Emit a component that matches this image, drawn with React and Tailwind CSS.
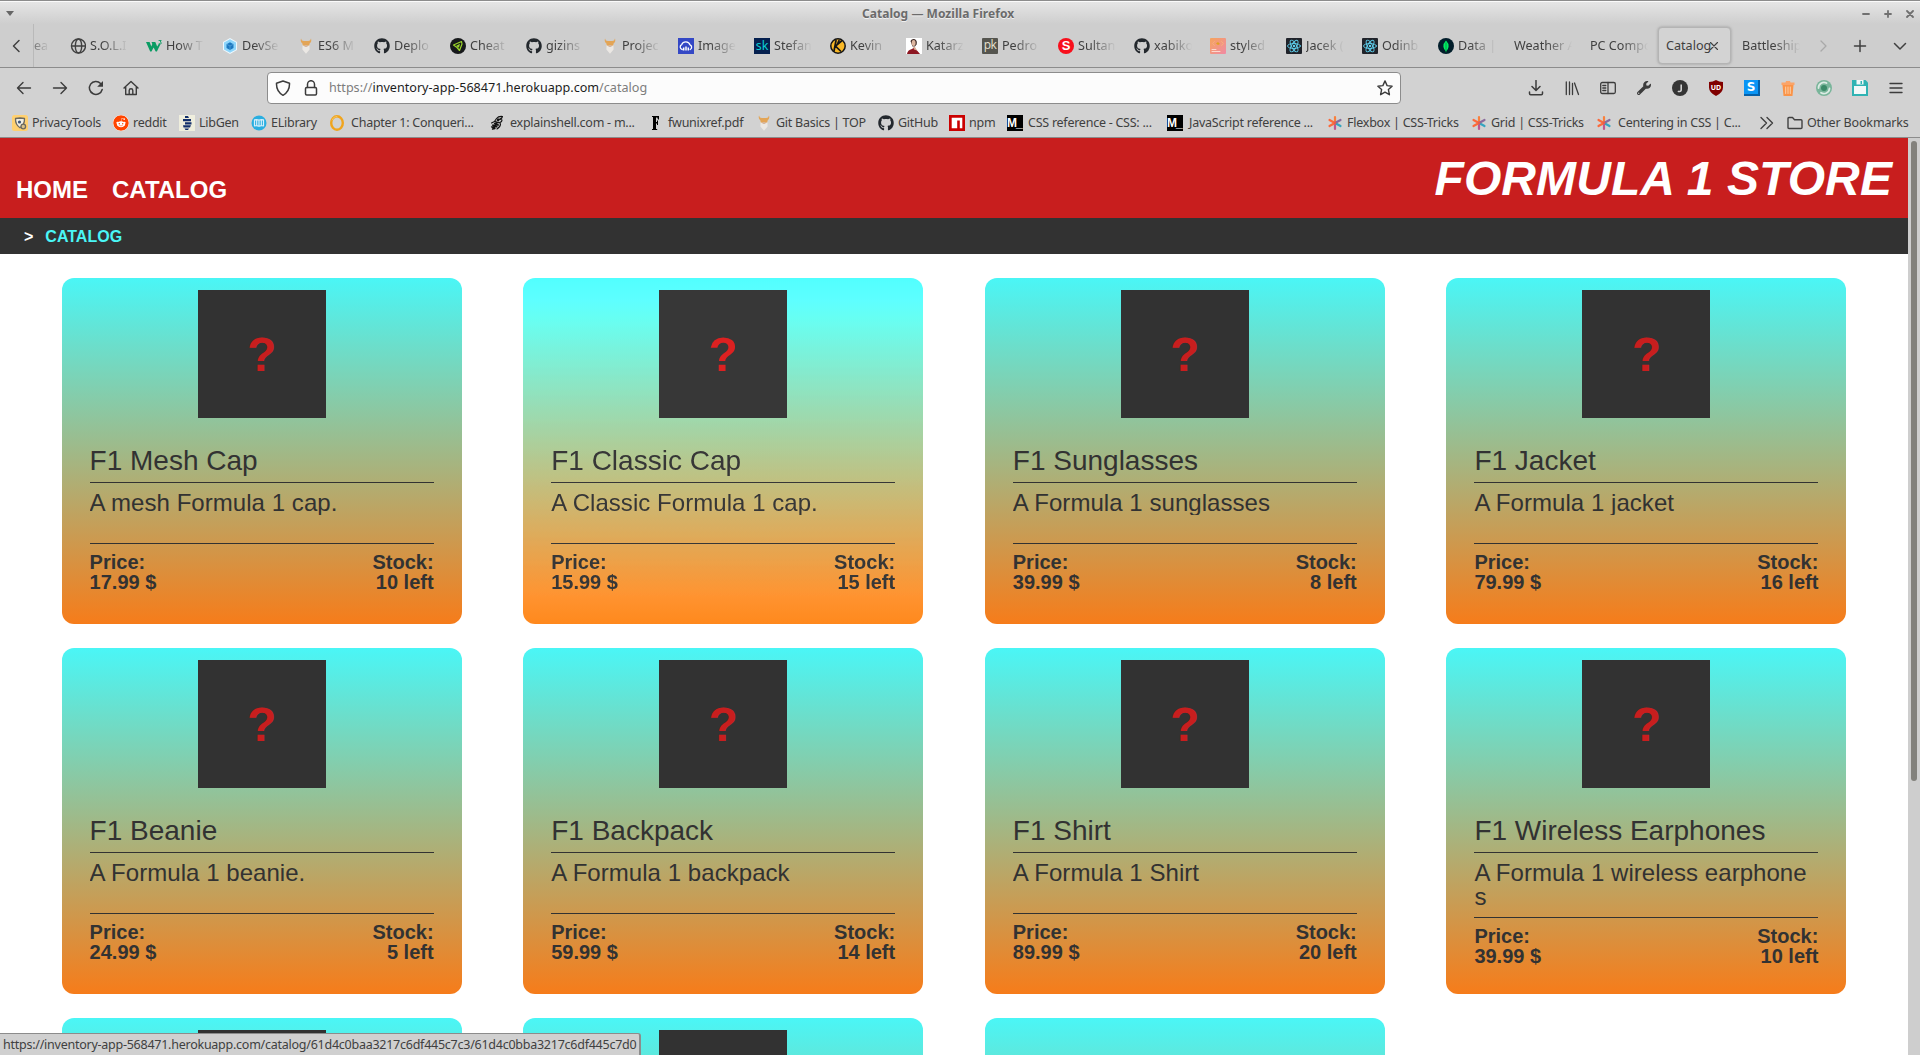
import React from "react";
import { FaGithub, FaReddit, FaWrench } from "react-icons/fa";

const svgBase = { fill: "none", stroke: "currentColor", strokeLinecap: "round", strokeLinejoin: "round" };

function Icon({ size = 16, sw = 1.3, children, className = "" }) {
  return (
    <svg width={size} height={size} viewBox={`0 0 ${size} ${size}`} className={`block shrink-0 ${className}`} {...svgBase} strokeWidth={sw}>
      {children}
    </svg>
  );
}

const Globe = () => (
  <Icon sw={1.4}>
    <circle cx="8.500" cy="8" r="7" />
    <ellipse cx="8.500" cy="8" rx="3.200" ry="7" />
    <path d="M1.500 8h14" />
  </Icon>
);
const W3 = () => (
  <Icon sw={0}>
    <path d="M0 4h3.600l1.700 4.500 1-2.500L5.500 4h3.800l1.900 4.500L13 5.500l1.300 1L10.900 13.500H9.700L7.600 9.500 5.500 13.500H4.200z" fill="#0a9c63" />
    <path d="M13 2.500h2.200L14.200 4q1.500.2 1 1.600-.8.8-2 .1" stroke="#0a9c63" strokeWidth=".9" fill="none" />
  </Icon>
);
const Webpack = () => (
  <Icon sw={0}>
    <path d="M8 0l7 4v8l-7 4-7-4V4z" fill="#eef8fe" />
    <path d="M8 1.200l6 3.400v6.800l-6 3.400-6-3.400V4.600z" fill="#8ed6fb" />
    <path d="M8 4.200l3.500 2v3.700L8 12l-3.500-2.100V6.200z" fill="#1c78c0" />
    <path d="M4.500 6.200L8 8l3.500-1.800M8 8v4" stroke="#63aee3" strokeWidth=".6" />
  </Icon>
);
const Odin = () => (
  <Icon sw={0}>
    <path d="M3 .5q.5 2.500 2.800 2.500h4.400q2.300 0 2.800-2.500 1 3.300-1.300 4.800l-.5 2.700H4.800L4.300 5.300Q2 3.800 3 .5z" fill="#e3a556" />
    <path d="M4.600 6.500L6.200 8.500h3.600l1.600-2 .2 5L8 15.700l-3.600-4.200z" fill="#ebe8e4" />
    <path d="M6 7h4L9 9H7z" fill="#d9b79a" />
  </Icon>
);
const Github = () => <FaGithub size={16} color="#23282d" className="block shrink-0" />;
const Cheat = () => (
  <Icon sw={1.2}>
    <circle cx="8" cy="8" r="8" fill="#17191b" stroke="none" />
    <path d="M3.500 7L11.500 3.500l.5 2.500-2.500 6.500L7 9.500z" stroke="#9bd42b" />
    <path d="M6 8l4-2.200-1 4z" fill="#9bd42b" stroke="none" />
  </Icon>
);
const Cloud = () => (
  <Icon sw={1.3}>
    <rect width="16" height="16" fill="#3448c5" stroke="none" />
    <path d="M4.200 11.500A2.600 2.600 0 0 1 3.700 6.600a4.400 4.400 0 0 1 8.300.3A2.500 2.500 0 0 1 12.200 11.500" stroke="#fff" />
    <path d="M5.700 9.500v3M8 8.500v4M10.300 9.500v3" stroke="#fff" strokeWidth="1.500" strokeLinecap="butt" />
  </Icon>
);
const Sk = () => <span className="flex h-4 w-4 shrink-0 items-center justify-center bg-[#05204f] font-['Noto_Sans',sans-serif] text-[12.500px] leading-4 text-[#0bd0d2]">sk</span>;
const Kevin = () => (
  <Icon sw={1.500}>
    <circle cx="8" cy="8" r="7.200" fill="#f9b826" stroke="#151515" />
    <path d="M6 2.500L4 13M11.500 3L5.500 8.200l5 4.800M9 2.500L7.500 6" stroke="#151515" strokeWidth="1.700" />
  </Icon>
);
const Portrait = () => (
  <Icon sw={0}>
    <rect width="16" height="16" fill="#fff" />
    <path d="M4.500 3Q6 .2 9 1.200q2.500 1.500 1.600 5L9 8.500H6.500z" fill="#3b2724" />
    <ellipse cx="7.600" cy="5" rx="2" ry="3" fill="#deb7a0" />
    <path d="M1 16q.5-4 5-5l2-1.500 3.500 3.500L14 16z" fill="#8d1722" />
    <path d="M7 8.500l2 .5 2 3.500-3-1z" fill="#d9ad95" />
  </Icon>
);
const Pk = () => <span className="flex h-4 w-4 shrink-0 items-center justify-center rounded-[1px] bg-[#55554f] pb-[2px] font-['Open_Sans',sans-serif] text-[12px] leading-4 tracking-[-0.500px] text-[#e7e2cf]">pk</span>;
const Sultan = () => <span className="flex h-4 w-4 shrink-0 items-center justify-center rounded-full bg-[#f80f1c] font-['Liberation_Sans',sans-serif] text-[13px] font-bold leading-4 text-white">S</span>;
const Styled = () => (
  <Icon sw={1}>
    <defs>
      <linearGradient id="styledBg" x1="0" y1="0" x2="1" y2="1">
        <stop offset="0" stopColor="#f5a45d" />
        <stop offset="1" stopColor="#f08aa5" />
      </linearGradient>
    </defs>
    <rect width="16" height="16" rx="1" fill="url(#styledBg)" stroke="none" />
    <path d="M4.500 3.500L2.500 5.500l2 2M11.500 3.500l2 2-2 2" stroke="#f7b07c" />
    <path d="M6 5.500l2-1.500 2 2-2 1z" fill="#e0a020" stroke="none" />
    <path d="M2 11.500h4M2 13.500h8" stroke="#fcd9cf" />
  </Icon>
);
const ReactLogo = () => (
  <Icon sw={0.9}>
    <rect width="16" height="16" rx="1" fill="#20232a" stroke="none" />
    <g stroke="#5fd0ee">
      <ellipse cx="8" cy="8" rx="6.500" ry="2.500" />
      <ellipse cx="8" cy="8" rx="6.500" ry="2.500" transform="rotate(60 8 8)" />
      <ellipse cx="8" cy="8" rx="6.500" ry="2.500" transform="rotate(120 8 8)" />
    </g>
    <circle cx="8" cy="8" r="1.200" fill="#5fd0ee" stroke="none" />
  </Icon>
);
const Mongo = () => (
  <Icon sw={0}>
    <circle cx="8" cy="8" r="8" fill="#021e2b" />
    <path d="M8 2.500q3 3 2.600 6.200Q10.300 11.500 8 13.500 5.700 11.500 5.400 8.700 5 5.500 8 2.500z" fill="#00ed64" />
    <path d="M8 5v9" stroke="#06913f" strokeWidth=".8" />
  </Icon>
);

const tabs = [
  { icon: <Globe />, label: "S.O.L.I" },
  { icon: <W3 />, label: "How T" },
  { icon: <Webpack />, label: "DevSe" },
  { icon: <Odin />, label: "ES6 M" },
  { icon: <Github />, label: "Deplo" },
  { icon: <Cheat />, label: "Cheat" },
  { icon: <Github />, label: "gizins" },
  { icon: <Odin />, label: "Projec" },
  { icon: <Cloud />, label: "Image" },
  { icon: <Sk />, label: "Stefan" },
  { icon: <Kevin />, label: "Kevin" },
  { icon: <Portrait />, label: "Katarz" },
  { icon: <Pk />, label: "Pedro" },
  { icon: <Sultan />, label: "Sultan" },
  { icon: <Github />, label: "xabiko" },
  { icon: <Styled />, label: "styled" },
  { icon: <ReactLogo />, label: "Jacek (" },
  { icon: <ReactLogo />, label: "Odinb" },
  { icon: <Mongo />, label: "Data |" },
];

const fade = "[mask-image:linear-gradient(to_left,transparent,black_26px)]";

function TabStrip() {
  return (
    <div className="flex h-[44px] items-center border-b border-[#8c8c8c] bg-[#cecece] text-[12.600px] text-[#404040]">
      <div className="flex h-full w-[34px] items-center border-r border-[#b9b9b9] pl-[8px]">
        <Icon sw={1.500}><path d="M11 2.500L5.500 8l5.500 5.500" /></Icon>
      </div>
      <div className={`w-[16px] overflow-hidden whitespace-nowrap ${fade}`}>ea</div>
      <div className="ml-[20px] flex">
        {tabs.map((t, i) => (
          <div key={i} className="flex h-[44px] w-[76px] items-center">
            {t.icon}
            <span className={`ml-[4px] w-[38px] overflow-hidden whitespace-nowrap ${fade}`}>{t.label}</span>
          </div>
        ))}
      </div>
      <div className={`w-[58px] overflow-hidden whitespace-nowrap ${fade}`}>Weather A</div>
      <div className={`ml-[18px] w-[58px] overflow-hidden whitespace-nowrap ${fade}`}>PC Compo</div>
      <div className="ml-[10px] flex h-[37px] w-[73px] items-center rounded-[4px] border border-[#b4b4b4] bg-[#d3d3d3] pl-[7px] shadow-[0_0_3px_#9a9a9a]">
        <span className="w-[43px]">Catalog</span>
        <Icon size={10} sw={1.100}><path d="M1.500 1.500l7 7M8.500 1.500l-7 7" /></Icon>
      </div>
      <div className={`ml-[11px] w-[58px] overflow-hidden whitespace-nowrap ${fade}`}>Battleship</div>
      <Icon sw={1.300} className="ml-[15px] text-[#a9a9a9]"><path d="M6 3l5 5-5 5" /></Icon>
      <Icon sw={1.500} className="ml-[21px]"><path d="M8 2.500v11M2.500 8h11" /></Icon>
      <Icon sw={1.500} className="ml-[24px]"><path d="M2.500 5.500L8 11l5.500-5.500" /></Icon>
    </div>
  );
}

function NavBar() {
  return (
    <div className="flex h-[40px] items-center text-[#3c3c3c]">
      <Icon sw={1.400} className="ml-[16px]"><path d="M14.500 8H1.500M7 2.500L1.500 8 7 13.500" /></Icon>
      <Icon sw={1.400} className="ml-[20px]"><path d="M1.500 8h13M9 2.500L14.500 8 9 13.500" /></Icon>
      <Icon sw={1.500} className="ml-[20px]">
        <path d="M14.200 9.500A6.500 6.500 0 1 1 12.600 3.400" />
        <path d="M15 1v5.800H9.200z" fill="currentColor" stroke="none" />
      </Icon>
      <Icon sw={1.400} className="ml-[19px]">
        <path d="M1 8l7-6.500L15 8M2.700 7v7.500h10.600V7M6.200 14.500V10.500q0-1.700 1.800-1.700t1.800 1.700v4" />
      </Icon>
      <div className="ml-[128px] flex h-[32px] w-[1134px] items-center rounded-[4px] border border-[#8c8c8c] bg-[#fcfcfc]">
        <Icon sw={1.500} className="ml-[7px]">
          <path d="M8 1l6.500 2.300c.2 5-1.500 9.200-6.500 12-5-2.800-6.700-7-6.500-12z" />
        </Icon>
        <Icon sw={1.500} className="ml-[12px]">
          <rect x="2.500" y="7.500" width="11" height="7.500" rx="1.200" />
          <path d="M4.500 7.500V4.200a3.500 3.500 0 0 1 7 0v3.300" />
        </Icon>
        <span className="ml-[10px] text-[12.600px] text-[#7d7d7d]">https://<span className="text-[#1c1c1c]">inventory-app-568471.herokuapp.com</span>/catalog</span>
        <Icon sw={1.400} className="ml-auto mr-[7px]">
          <path d="M8 .9l2.100 4.700 5 .6-3.700 3.400 1 5.100L8 12.200l-4.400 2.500 1-5.100L.9 6.200l5-.6z" />
        </Icon>
      </div>
      <div className="ml-auto mr-[16px] flex items-center gap-[20px]">
        <Icon sw={1.500}><path d="M8 .5v9.500M4 6.500L8 10.500l4-4M1.500 12v1.500q0 1.200 1.200 1.200h10.600q1.200 0 1.200-1.200V12" /></Icon>
        <Icon sw={1.300}><path d="M2.300 2v12.500M5.500 2v12.500M8.500 3.500v11M10.500 3l4 11.500" /></Icon>
        <Icon sw={1.300}>
          <rect x=".7" y="2.500" width="14.600" height="11" rx="1.500" />
          <path d="M8 2.500v11M2.800 5.500h3M2.800 8h3M2.800 10.500h3" />
        </Icon>
        <FaWrench size={14} className="mx-px block shrink-0" />
        <span className="flex h-4 w-4 items-center justify-center rounded-full bg-[#353535] font-['Open_Sans',sans-serif] text-[10px] font-bold leading-4 text-[#d2d2d2]">
          <svg width="16" height="16" viewBox="0 0 16 16" className="block"><path d="M9.200 4.500v5q0 2-1.700 2-1 0-1.500-.6" fill="none" stroke="#d2d2d2" strokeWidth="1.600" /></svg>
        </span>
        <span className="relative flex h-4 w-4 items-center justify-center">
          <svg width="16" height="16" viewBox="0 0 16 16" className="absolute inset-0"><path d="M8 0q3 1.800 7 2v5.500q0 5-7 8.500-7-3.500-7-8.500V2q4-.2 7-2z" fill="#800000" /></svg>
          <span className="relative text-[7px] font-bold leading-4 text-white">UD</span>
        </span>
        <span className="flex h-4 w-4 items-start bg-[#0560a8]">
          <span className="flex h-[14px] w-[14px] items-center justify-center bg-[#0a95f5] font-['DejaVu_Sans',sans-serif] text-[12px] font-bold text-white">S</span>
        </span>
        <Icon sw={1}>
          <path d="M1.500 2.500h4L6 1h4l.5 1.500h4V5h-13z" fill="#fba468" stroke="none" />
          <path d="M2.500 5h11l-1 11h-9z" fill="#fb9448" stroke="none" />
          <path d="M5.700 7v6.500M8 7v6.500M10.300 7v6.500" stroke="#fdd0a8" />
        </Icon>
        <Icon sw={1.800}>
          <circle cx="8" cy="8" r="8" fill="#79b59a" stroke="none" />
          <path d="M2.500 8A5.500 5.500 0 0 1 10.500 3M13.500 8.500A5.500 5.500 0 0 1 5 12.700" stroke="#dcebe4" />
          <circle cx="8" cy="8" r="3" fill="#3b8a68" stroke="none" />
        </Icon>
        <Icon sw={0}>
          <path d="M0 0h13.500L16 2.500V16H0z" fill="#2fb3b3" />
          <path d="M4.500 0h7v4.500h-7zM2 6h12v8H2z" fill="#f2f8f8" />
          <path d="M8.500 1h1.500v3H8.500z" fill="#2fb3b3" />
        </Icon>
        <Icon sw={1.400}><path d="M2 3.500h12M2 8h12M2 12.500h12" /></Icon>
      </div>
    </div>
  );
}

const Privacy = () => (
  <Icon sw={1.300}>
    <rect width="16" height="16" rx="2.500" fill="#ffd06f" stroke="none" />
    <path d="M3.500 3.500L8 3l4.500.5q.3 6-4.500 9.300-4.800-3.300-4.500-9.300z" fill="#f2efe2" stroke="#6c6a61" />
    <circle cx="7.500" cy="7" r="1.600" fill="#3d5577" stroke="none" />
    <circle cx="11.300" cy="11.500" r="2.300" fill="#d9c28a" stroke="#6c6a61" />
  </Icon>
);
const Reddit = () => <FaReddit size={16} color="#ff4500" className="block shrink-0 rounded-full bg-white" />;
const LibGen = () => (
  <Icon sw={0}>
    <rect width="16" height="16" fill="#efeedd" />
    <path d="M6 1h3l1 2H6zM4 4h8v2.300H4zM6 7.300h6.500v2.200H6zM4 10.300h8l-1 2.200H4.500zM5.500 13.500h4.500L9 15H6.500z" fill="#132f6b" />
  </Icon>
);
const ELib = () => (
  <Icon sw={1.200}>
    <circle cx="8" cy="8" r="7.500" fill="#2aaee0" stroke="none" />
    <path d="M8 5Q6 4.200 3.500 4.800v6Q6 10.300 8 11.300q2-1 4.500-.5v-6Q10 4.200 8 5zM8 5v6M5.700 5v5M10.300 5v5" stroke="#d6effa" />
  </Icon>
);
const Ring = () => (
  <Icon sw={2.400}><ellipse cx="8" cy="8" rx="5.800" ry="6.700" stroke="#f0a41c" /><path d="M3 5Q4 1.500 8 1.300" stroke="#f7c55d" strokeWidth="1" /></Icon>
);
const Explain = () => (
  <Icon sw={1.100} className="text-[#111]">
    <path d="M13.500 1.500q-4-.5-6 2L5.500 6.500l-3 1.500M13.500 1.500q-.5 2-2.500 2.500l2 1q0 2-2.500 2.500l1 1.500q0 3-3.500 5" />
    <path d="M6 6.500l3.500 1-4 1 4 1.500-6 .2 4.500 1.600-5.500 0 3.500 1.700-2.500.5" strokeWidth="1.300" />
    <path d="M8.500 3.200l3 .8-2 2.500-2-1z" fill="currentColor" stroke="none" />
  </Icon>
);
const Fw = () => (
  <Icon sw={0}><path d="M4 1h7v3.500h-1L9.300 2.500H8V7h1V5.500h1V10H9V8.500H8V14h1.200v1H4v-1h1V2H4z" fill="#000" /></Icon>
);
const Npm = () => (
  <Icon sw={0}><rect width="16" height="16" fill="#cb0000" /><path d="M2.700 2.700h10.600v10.600h-2.500V5.500H8.200v7.800H2.700z" fill="#fff" /></Icon>
);
const Mdn = () => <span className="flex h-4 w-4 shrink-0 items-center overflow-hidden bg-black font-['Liberation_Sans',sans-serif] text-[12px] font-bold leading-4 tracking-[-1px] text-white">M_</span>;
const Star = () => (
  <Icon sw={2.200}>
    <path d="M8 2v6" stroke="#f9803d" /><path d="M8 8v6" stroke="#c0558e" />
    <path d="M2.500 5L8 8" stroke="#fb6a3c" /><path d="M8 8l5.500 3" stroke="#35a5c0" />
    <path d="M13.500 5L8 8" stroke="#8a6a9c" /><path d="M8 8l-5.500 3" stroke="#fb6a3c" />
    <circle cx="8" cy="8" r="1.200" fill="#e85b50" stroke="none" />
  </Icon>
);

const bookmarks = [
  { icon: <Privacy />, label: "PrivacyTools", w: "w-[101px] gap-[4px]" },
  { icon: <Reddit />, label: "reddit", w: "w-[66px] gap-[4px]" },
  { icon: <LibGen />, label: "LibGen", w: "w-[72px] gap-[4px]" },
  { icon: <ELib />, label: "ELibrary", w: "w-[78px] gap-[4px]" },
  { icon: <Ring />, label: "Chapter 1: Conqueri...", w: "w-[160px] gap-[6px]" },
  { icon: <Explain />, label: "explainshell.com - m...", w: "w-[159px] gap-[5px]" },
  { icon: <Fw />, label: "fwunixref.pdf", w: "w-[108px] gap-[4px]" },
  { icon: <Odin />, label: "Git Basics | TOP", w: "w-[122px] gap-[4px]" },
  { icon: <Github />, label: "GitHub", w: "w-[71px] gap-[4px]" },
  { icon: <Npm />, label: "npm", w: "w-[58px] gap-[4px]" },
  { icon: <Mdn />, label: "CSS reference - CSS: ...", w: "w-[160px] gap-[5px]" },
  { icon: <Mdn />, label: "JavaScript reference ...", w: "w-[160px] gap-[6px]" },
  { icon: <Star />, label: "Flexbox | CSS-Tricks", w: "w-[144px] gap-[4px]" },
  { icon: <Star />, label: "Grid | CSS-Tricks", w: "w-[125px] gap-[4px]" },
  { icon: <Star />, label: "Centering in CSS | C...", w: "w-[160px] gap-[6px]" },
];

function BookmarkBar() {
  return (
    <div className="flex h-[30px] items-center border-b border-[#8c8c8c] pl-[12px] text-[12.500px] tracking-[-0.250px] text-[#404040]">
      {bookmarks.map((b, i) => (
        <div key={i} className={`flex shrink-0 items-center whitespace-nowrap ${b.w}`}>
          {b.icon}
          <span>{b.label}</span>
        </div>
      ))}
      <Icon sw={1.400} className="ml-[3px]"><path d="M2 2.500L7.500 8 2 13.500M8 2.500L13.500 8 8 13.500" /></Icon>
      <Icon sw={1.400} className="ml-[12px]"><path d="M1 12.500V3.500q0-1 1-1h3.500l2 2.200H14q1 0 1 1v6.800q0 1-1 1H2q-1 0-1-1z" /></Icon>
      <span className="ml-[4px] whitespace-nowrap tracking-[-0.150px]">Other Bookmarks</span>
    </div>
  );
}

const products = [
  ["F1 Mesh Cap", "A mesh Formula 1 cap.", "17.99", 10],
  ["F1 Classic Cap", "A Classic Formula 1 cap.", "15.99", 15],
  ["F1 Sunglasses", "A Formula 1 sunglasses", "39.99", 8],
  ["F1 Jacket", "A Formula 1 jacket", "79.99", 16],
  ["F1 Beanie", "A Formula 1 beanie.", "24.99", 5],
  ["F1 Backpack", "A Formula 1 backpack", "59.99", 14],
  ["F1 Shirt", "A Formula 1 Shirt", "89.99", 20],
  ["F1 Wireless Earphones", "A Formula 1 wireless earphones", "39.99", 10],
];

const cardBase = "h-[346px] w-[400px] rounded-[12px] bg-linear-to-b/srgb from-[#4af6f6] to-[#f67c1a]";

function Card({ product: [name, desc, price, stock], active }) {
  return (
    <article className={`${cardBase} px-[28px] pt-[12px] text-[#323232] ${active ? "brightness-110" : ""}`}>
      <div className="mx-auto h-[128px] w-[128px] bg-[#323232] text-center text-[48px] font-bold leading-[129px] text-[#c81e1e]">?</div>
      <h2 className="mt-[29px] border-b border-[#323232] pb-[7px] text-[28px] leading-[28px]">{name}</h2>
      <div className="min-h-[61px] border-b border-[#323232] py-[8px]">
        <p className="overflow-hidden break-all pr-[4px] text-[24px] leading-[24px] tracking-[0.050px]">{desc}</p>
      </div>
      <div className="flex justify-between pt-[8px] text-[20px] font-bold leading-[20px]">
        <p>Price:<br />{price} $</p>
        <p className="text-right">Stock:<br />{stock} left</p>
      </div>
    </article>
  );
}

export default function App() {
  return (
    <div className="relative flex h-[1055px] w-[1920px] flex-col overflow-hidden bg-[#d2d2d2] font-['Noto_Sans',sans-serif] text-[13px] leading-[18px]">
      <div className="flex h-[24px] items-center border-t border-[#8c8c8c] bg-linear-to-b from-[#e6e6e6] to-[#cecece] text-[#6b6b6b] shadow-[inset_0_1px_0_#fafafa]">
        <svg width="8" height="5" viewBox="0 0 8 5" className="ml-[6px] mt-[2px]"><path d="M0 0h8L4 5z" fill="#666" /></svg>
        <div className="ml-[848px] mt-[2px] whitespace-nowrap text-[12px] font-bold tracking-[0.040px] [text-shadow:0_1px_0_#f0f0f0]">Catalog — Mozilla Firefox</div>
        <div className="ml-auto mr-[6px] mt-[2px] flex gap-[14px] text-[#707070]">
          <Icon size={8} sw={1.800}><path d="M1 4h6" /></Icon>
          <Icon size={8} sw={1.800}><path d="M1 4h6M4 1v6" /></Icon>
          <Icon size={8} sw={1.800}><path d="M1 1l6 6M7 1L1 7" /></Icon>
        </div>
      </div>
      <TabStrip />
      <NavBar />
      <BookmarkBar />
      <div className="flex min-h-0 flex-1 font-['Liberation_Sans',Arial,sans-serif]">
        <main className="w-[1908px] overflow-hidden bg-white">
          <header className="flex h-[80px] items-end justify-between bg-[#c81e1e] px-[16px] font-bold text-white">
            <nav className="flex gap-[24px] pb-[16px] text-[24px] leading-[24px]">
              <a>HOME</a>
              <a>CATALOG</a>
            </nav>
            <h1 className="pb-[15px] text-[48px] italic leading-[49px] tracking-[0.100px]">FORMULA 1 STORE</h1>
          </header>
          <div className="flex h-[36px] items-center gap-[12px] bg-[#323232] pl-[24px] pt-[1px] text-[16px] font-bold leading-[17px] text-white">
            <span>&gt;</span>
            <a className="text-[#4af6f6]">CATALOG</a>
          </div>
          <section className="grid grid-cols-[repeat(4,400px)] justify-evenly gap-y-[24px] pt-[24px]">
            {products.map((p, i) => (
              <Card key={i} product={p} active={i === 1} />
            ))}
            {[0, 1, 2].map((i) => (
              <article key={i} className={`${cardBase} pt-[12px]`}>
                {i < 2 && <div className="mx-auto h-[128px] w-[128px] bg-[#323232]" />}
              </article>
            ))}
          </section>
        </main>
        <div className="w-[12px] bg-[#cecece] pl-[3px] pt-[3px]">
          <div className="h-[640px] w-[6px] rounded-full bg-[#82817c]" />
        </div>
      </div>
      <div className="absolute bottom-0 left-0 h-[22px] w-[641px] whitespace-nowrap rounded-tr-[3px] border-r-2 border-t border-[#8c8c8c] bg-[#d0d0d0] pl-[3px] text-[12.500px] leading-[22px] tracking-[-0.250px] text-[#404040]">
        https://inventory-app-568471.herokuapp.com/catalog/61d4c0baa3217c6df445c7c3/61d4c0bba3217c6df445c7d0
      </div>
    </div>
  );
}
